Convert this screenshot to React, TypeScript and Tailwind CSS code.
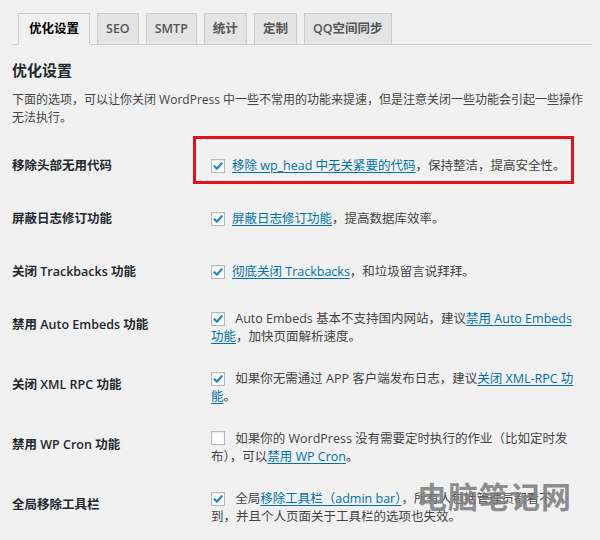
const tabs = ["优化设置", "SEO", "SMTP", "统计", "定制", "QQ空间同步"];

function Checkbox({ checked = true }: { checked?: boolean }) {
  return (
    <span className="mr-[7px] inline-flex h-[14px] w-[14px] items-center justify-center border border-[#b4b9be] bg-white align-[-2px] shadow-[inset_0_1px_2px_rgba(0,0,0,0.1)]">
      {checked && (
        <svg viewBox="0 0 14 14" className="h-[12px] w-[12px]">
          <path d="M2.8 7.2 L5.7 10.1 L11.3 3.8" fill="none" stroke="#1e8cbe" strokeWidth="2.6" strokeLinecap="round" strokeLinejoin="round" />
        </svg>
      )}
    </span>
  );
}

function A({ children }: { children: React.ReactNode }) {
  return <a className="cursor-pointer text-[#0073aa] underline underline-offset-2">{children}</a>;
}

function Row({ label, children, boxed = false }: { label: string; children: React.ReactNode; boxed?: boolean }) {
  return (
    <div className="flex items-start">
      <div className="w-[199px] shrink-0 py-[18px] text-[12.5px] font-semibold leading-[17px] text-[#23282d]">{label}</div>
      <div className="relative min-w-0 flex-1 self-center whitespace-nowrap py-[12px] text-[12.5px] leading-[18px] text-[#444]">
        {boxed && <span className="pointer-events-none absolute -left-[18px] top-[-9px] h-[48px] w-[381px] border-[3px] border-[#e3131b]" />}
        {children}
      </div>
    </div>
  );
}

export default function App() {
  return (
    <div className="relative h-[540px] w-[600px] overflow-hidden bg-[#f1f1f1] pl-[12px] pr-[8px] font-['Open_Sans','Noto_Sans_CJK_SC',sans-serif]">
      <div className="flex gap-[7px] border-b border-[#ccc] pl-[6px] pt-[13px]">
        {tabs.map((t, i) => (
          <div
            key={t}
            className={
              i === 0
                ? "-mb-px flex h-[32px] items-center border border-[#ccc] border-b-[#f1f1f1] bg-[#f1f1f1] px-[10px] text-[12.5px] font-semibold text-[#000]"
                : "-mb-px flex h-[32px] items-center border border-[#ccc] bg-[#e4e4e4] px-[8px] text-[12.5px] font-semibold text-[#555]"
            }
          >
            {t}
          </div>
        ))}
      </div>

      <h2 className="mt-[15px] text-[15px] font-semibold leading-[20px] text-[#23282d]">优化设置</h2>
      <p className="mt-[11px] whitespace-nowrap text-[12px] leading-[18px] text-[#444]">
        下面的选项，可以让你关闭 WordPress 中一些不常用的功能来提速，但是注意关闭一些功能会引起一些操作
        <br />
        无法执行。
      </p>

      <div className="mt-[12px]">
        <Row label="移除头部无用代码" boxed>
          <Checkbox />
          <A>移除 wp_head 中无关紧要的代码</A>，保持整洁，提高安全性。
        </Row>
        <Row label="屏蔽日志修订功能">
          <Checkbox />
          <A>屏蔽日志修订功能</A>，提高数据库效率。
        </Row>
        <Row label="关闭 Trackbacks 功能">
          <Checkbox />
          <A>彻底关闭 Trackbacks</A>，和垃圾留言说拜拜。
        </Row>
        <Row label="禁用 Auto Embeds 功能">
          <Checkbox /> Auto Embeds 基本不支持国内网站，建议
          <A>
            禁用 Auto Embeds
            <br />
            功能
          </A>
          ，加快页面解析速度。
        </Row>
        <Row label="关闭 XML RPC 功能">
          <Checkbox /> 如果你无需通过 APP 客户端发布日志，建议
          <A>
            关闭 XML-RPC 功
            <br />能
          </A>
          。
        </Row>
        <Row label="禁用 WP Cron 功能">
          <Checkbox checked={false} /> 如果你的 WordPress 没有需要定时执行的作业（比如定时发
          <br />
          布），可以<A>禁用 WP Cron</A>。
        </Row>
        <Row label="全局移除工具栏">
          <Checkbox /> 全局<A>移除工具栏（admin bar）</A>，所有人包括管理员都看不
          <br />
          到，并且个人页面关于工具栏的选项也失效。
        </Row>
      </div>

      <div className="pointer-events-none absolute left-[417px] top-[482px] text-[30px] font-bold leading-[30px] tracking-[1px] text-[#7f7f7f]/90">
        电脑笔记网
      </div>
    </div>
  );
}
